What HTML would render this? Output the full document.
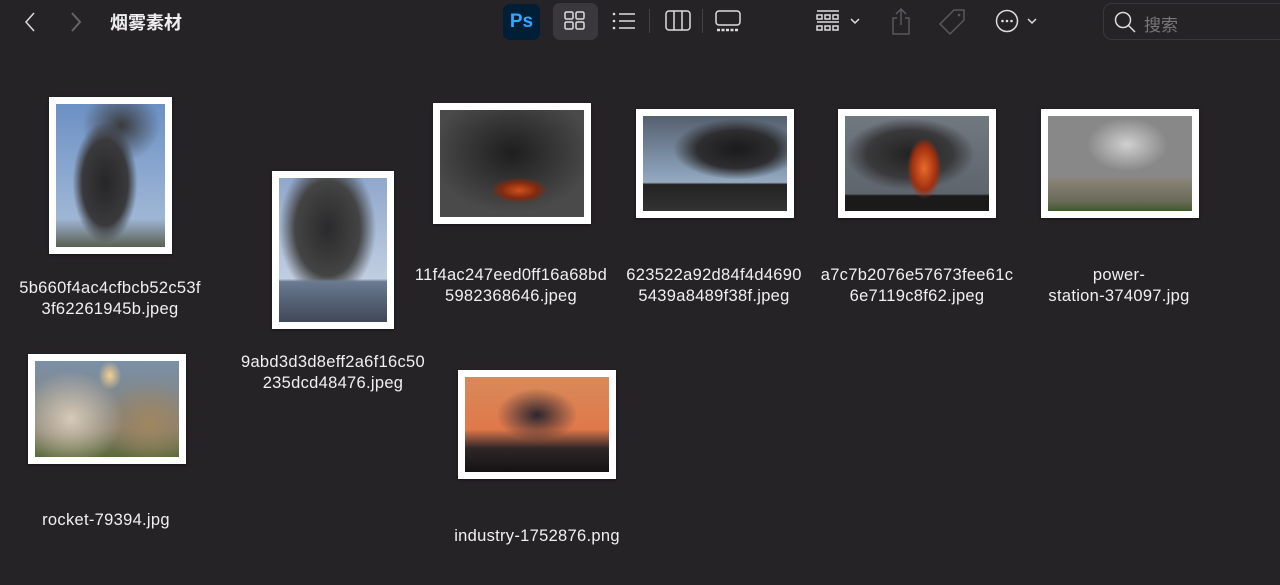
<!DOCTYPE html>
<html><head><meta charset="utf-8"><style>
*{margin:0;padding:0;box-sizing:border-box}
body{width:1280px;height:585px;background:#262327;overflow:hidden;position:relative;font-family:"Liberation Sans","Noto Sans CJK SC",sans-serif;color:#eee}
.a{position:absolute}
.f{position:absolute;background:#fff;padding:7px;box-shadow:0 1px 3px rgba(0,0,0,.5)}
.f div{width:100%;height:100%}
.l{position:absolute;font-size:16.5px;line-height:21px;text-align:center;color:#f0f0f0;width:240px;letter-spacing:0.3px}
.ic{stroke:#ddd;fill:none;stroke-width:1.5}
</style></head><body>
<svg class="a" style="left:20px;top:10px" width="20" height="24"><path d="M14 3 L6 12 L14 21" class="ic" stroke-width="2"/></svg>
<svg class="a" style="left:66px;top:10px" width="20" height="24"><path d="M6 3 L14 12 L6 21" stroke="#666" fill="none" stroke-width="2"/></svg>
<div class="a" style="left:110px;top:9px;font-size:18px;font-weight:bold;color:#eee">烟雾素材</div>
<div class="a" style="left:503px;top:4px;width:37px;height:36px;background:#001e36;border-radius:7px;color:#31a8ff;font-weight:bold;font-size:19px;text-align:center;line-height:36px">Ps</div>
<div class="a" style="left:553px;top:3px;width:45px;height:37px;background:#3a383c;border-radius:7px"></div>
<svg class="a" style="left:563px;top:10px" width="24" height="22"><rect x="2" y="2" width="8" height="7" rx="1.5" class="ic"/><rect x="13" y="2" width="8" height="7" rx="1.5" class="ic"/><rect x="2" y="12" width="8" height="7" rx="1.5" class="ic"/><rect x="13" y="12" width="8" height="7" rx="1.5" class="ic"/></svg>
<svg class="a" style="left:611px;top:10px" width="26" height="22"><g class="ic"><path d="M8 4H24M8 11H24M8 18H24"/></g><circle cx="3" cy="4" r="1.3" fill="#ddd"/><circle cx="3" cy="11" r="1.3" fill="#ddd"/><circle cx="3" cy="18" r="1.3" fill="#ddd"/></svg>
<div class="a" style="left:649px;top:9px;width:1px;height:24px;background:#444"></div>
<svg class="a" style="left:664px;top:9px" width="28" height="24"><rect x="2" y="2" width="24" height="19" rx="3" class="ic"/><path d="M10 2V21M18 2V21" class="ic"/></svg>
<div class="a" style="left:702px;top:9px;width:1px;height:24px;background:#444"></div>
<svg class="a" style="left:714px;top:9px" width="28" height="24"><rect x="2" y="2" width="24" height="14" rx="3" class="ic"/><path d="M3 21h22" stroke="#ddd" stroke-width="2.5" stroke-dasharray="3 1.5"/></svg>
<svg class="a" style="left:814px;top:9px" width="50" height="26"><path d="M3 2H25M3 13H25" class="ic"/><g class="ic" stroke-width="1.2"><rect x="3" y="6" width="5" height="4"/><rect x="11" y="6" width="5" height="4"/><rect x="19" y="6" width="5" height="4"/><rect x="3" y="17" width="5" height="4"/><rect x="11" y="17" width="5" height="4"/><rect x="19" y="17" width="5" height="4"/></g><path d="M37 10l4 4 4-4" class="ic" stroke-width="2"/></svg>
<svg class="a" style="left:888px;top:6px" width="26" height="30"><path d="M9 12H5V28H21V12H17M13 3V19M8 8l5-5 5 5" stroke="#5a585c" fill="none" stroke-width="1.5"/></svg>
<svg class="a" style="left:936px;top:6px" width="32" height="30"><path d="M18 4H28V14L14 28 4 18Z" stroke="#5a585c" fill="none" stroke-width="1.5"/><circle cx="23" cy="9" r="1.3" fill="#5a585c"/></svg>
<svg class="a" style="left:994px;top:8px" width="50" height="28"><circle cx="13" cy="13" r="10.5" class="ic"/><circle cx="8.5" cy="13" r="1.3" fill="#ddd"/><circle cx="13" cy="13" r="1.3" fill="#ddd"/><circle cx="17.5" cy="13" r="1.3" fill="#ddd"/><path d="M34 11l4 4 4-4" class="ic" stroke-width="2"/></svg>
<div class="a" style="left:1103px;top:3px;width:190px;height:37px;border:1px solid #3a383c;border-radius:9px;background:#262327"></div>
<svg class="a" style="left:1113px;top:10px" width="26" height="26"><circle cx="10" cy="10" r="7.5" class="ic"/><path d="M15.5 15.5L22 22" class="ic" stroke-width="2"/></svg>
<div class="a" style="left:1144px;top:11px;font-size:17px;color:#777">搜索</div>

<div class="f" style="left:49px;top:97px;width:123px;height:157px"><div style="background:radial-gradient(ellipse 40% 28% at 60% 15%,#3a3a3c,transparent 90%),radial-gradient(ellipse 35% 50% at 45% 55%,#262628 0,#3a3a3c 60%,transparent 85%),linear-gradient(#6c90c4,#9fb7d6 80%,#5a5f52)"></div></div>
<div class="l" style="left:-10px;top:278px">5b660f4ac4cfbcb52c53f<br>3f62261945b.jpeg</div>
<div class="f" style="left:272px;top:171px;width:122px;height:158px"><div style="background:linear-gradient(transparent 70%,#6a7a90 72%,#404858),radial-gradient(ellipse 50% 55% at 45% 35%,#2a2a2c 0,#444 60%,transparent 90%),linear-gradient(#8fa7cc,#c8d4e4 80%,#7a8090)"></div></div>
<div class="l" style="left:213px;top:352px">9abd3d3d8eff2a6f16c50<br>235dcd48476.jpeg</div>
<div class="f" style="left:433px;top:103px;width:158px;height:121px"><div style="background:radial-gradient(ellipse 25% 15% at 55% 75%,#d0501c 0,#802a10 50%,transparent 80%),radial-gradient(ellipse 70% 70% at 50% 40%,#1e1e1e,#4a4a4a 80%)"></div></div>
<div class="l" style="left:391px;top:265px">11f4ac247eed0ff16a68bd<br>5982368646.jpeg</div>
<div class="f" style="left:636px;top:109px;width:158px;height:109px"><div style="background:linear-gradient(transparent 70%,#222 72%,#333),radial-gradient(ellipse 55% 40% at 65% 35%,#1a1a1c,#2e2e30 50%,transparent 80%),linear-gradient(#55606e,#8aa0b8 60%,#b8c8d8)"></div></div>
<div class="l" style="left:594px;top:265px">623522a92d84f4d4690<br>5439a8489f38f.jpeg</div>
<div class="f" style="left:838px;top:109px;width:158px;height:109px"><div style="background:radial-gradient(ellipse 14% 38% at 55% 55%,#ea6a2a,#a03010 60%,transparent 85%),linear-gradient(transparent 82%,#1a1a1a 84%),radial-gradient(ellipse 50% 42% at 45% 40%,#222,#3a3a3c 60%,transparent 90%),linear-gradient(#707880,#5a6068)"></div></div>
<div class="l" style="left:797px;top:265px">a7c7b2076e57673fee61c<br>6e7119c8f62.jpeg</div>
<div class="f" style="left:1041px;top:109px;width:158px;height:109px"><div style="background:linear-gradient(transparent 65%,#8a8478 66%,#6a6a58 90%,#3d5a2a),radial-gradient(ellipse 40% 40% at 55% 30%,#d0d0d0,#888 70%),#686c70"></div></div>
<div class="l" style="left:999px;top:265px">power-<br>station-374097.jpg</div>
<div class="f" style="left:28px;top:354px;width:158px;height:110px"><div style="background:radial-gradient(ellipse 8% 15% at 52% 15%,#f4d090,transparent),radial-gradient(ellipse 40% 55% at 25% 60%,#d6cab8,transparent 90%),radial-gradient(ellipse 35% 50% at 80% 65%,#a08660,transparent 90%),linear-gradient(#7a90a8,#8a8070 70%,#5a6a3a)"></div></div>
<div class="l" style="left:-14px;top:510px">rocket-79394.jpg</div>
<div class="f" style="left:458px;top:370px;width:158px;height:109px"><div style="background:radial-gradient(ellipse 35% 35% at 50% 40%,#2c2630,transparent 80%),linear-gradient(#d88a5a,#e0784a 55%,#302628 75%,#141214)"></div></div>
<div class="l" style="left:417px;top:526px">industry-1752876.png</div>
</body></html>
